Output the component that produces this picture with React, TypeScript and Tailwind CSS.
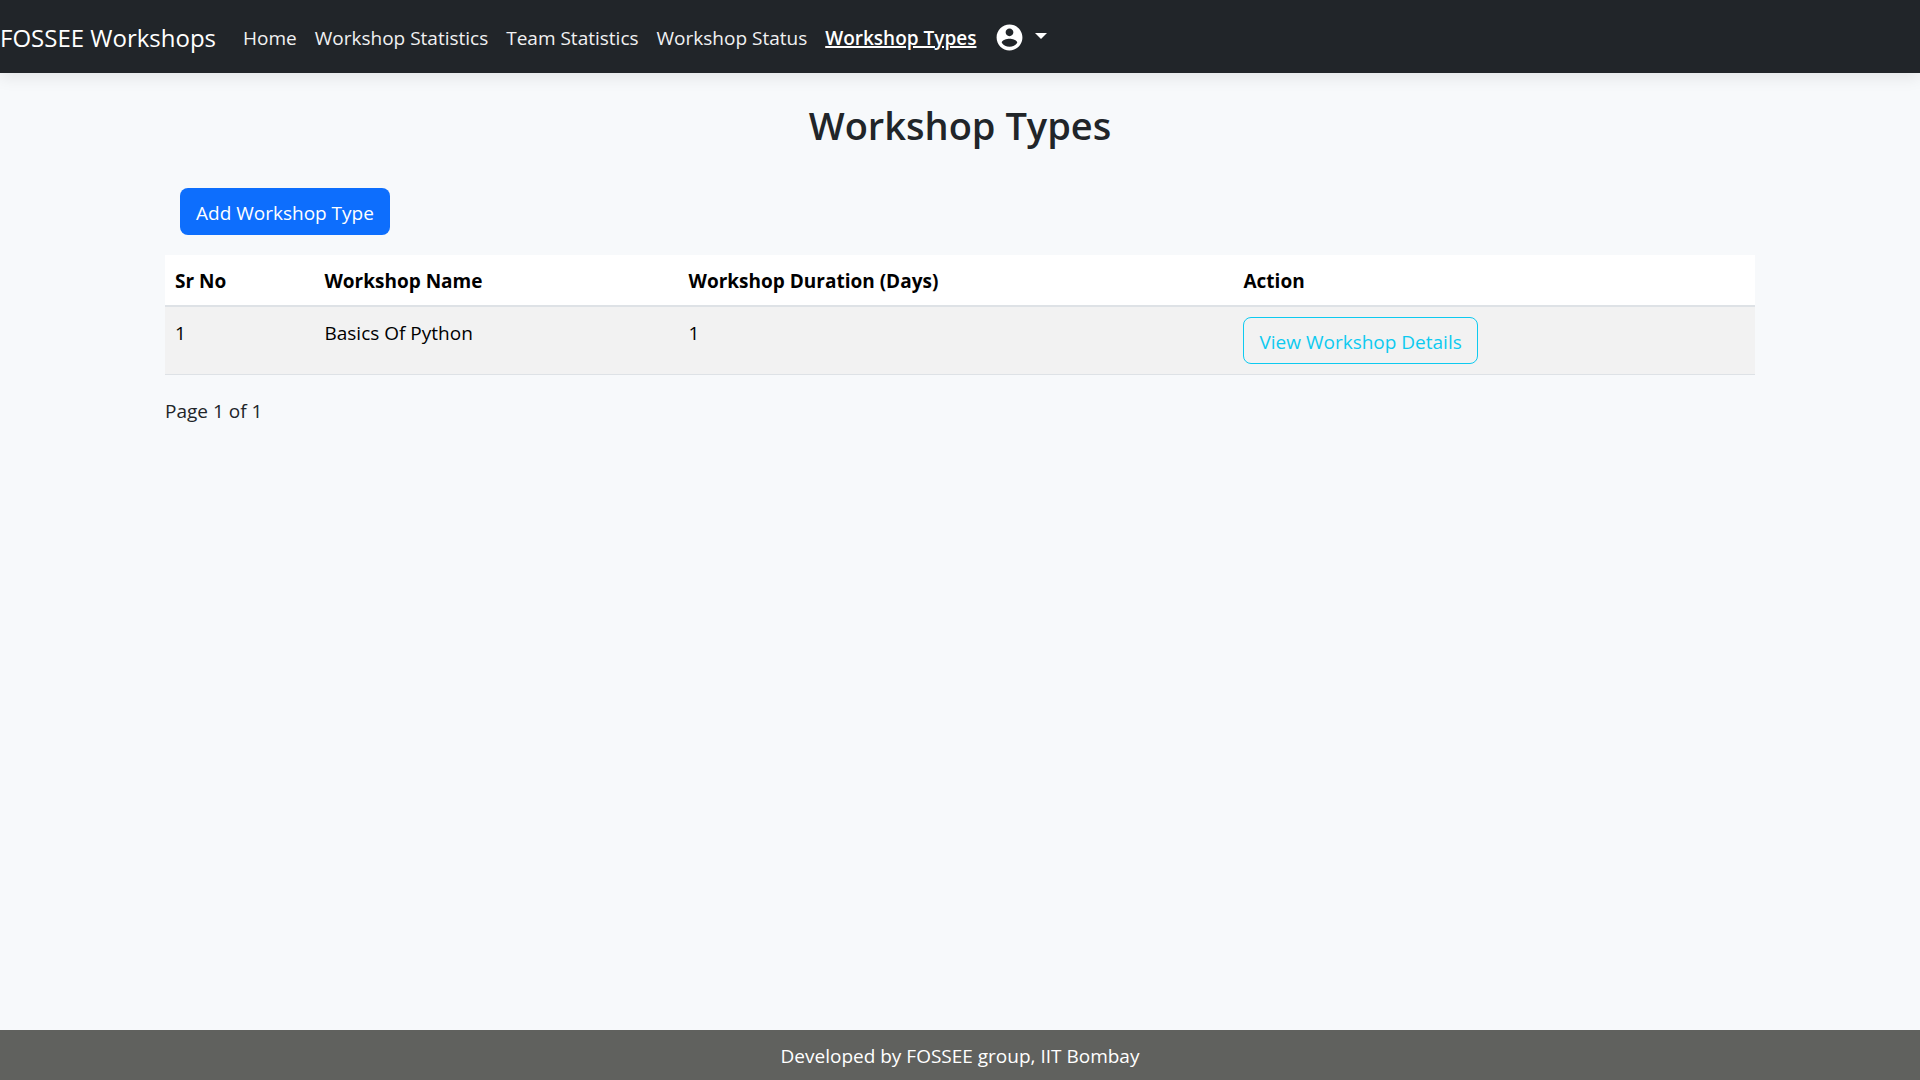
const navLinks = ['Home', 'Workshop Statistics', 'Team Statistics', 'Workshop Status'];

const workshopTypes = [{ id: 1, name: 'Basics Of Python', duration: 1 }];

function Navbar() {
  return (
    <header className="flex h-[73px] items-center bg-[#212529] pt-0.5 text-white shadow-[0_5px_15px_rgba(0,0,0,0.08)]">
      <a href="#" className="mr-[27px] text-2xl">
        FOSSEE Workshops
      </a>
      <nav className="flex items-center gap-[18px] font-medium">
        {navLinks.map((label) => (
          <a key={label} href="#" className="text-[#f1f1f2]">
            {label}
          </a>
        ))}
        <a href="#" aria-current="page" className="font-semibold underline decoration-2">
          Workshop Types
        </a>
        <button type="button" aria-label="Account menu" className="flex items-center gap-2.5">
          <svg viewBox="0 0 24 24" className="size-[31px]" fill="currentColor" aria-hidden="true">
            <path d="M12 2C6.48 2 2 6.48 2 12s4.48 10 10 10 10-4.48 10-10S17.52 2 12 2zm0 3c1.66 0 3 1.34 3 3s-1.34 3-3 3-3-1.34-3-3 1.34-3 3-3zm0 14.2c-2.5 0-4.71-1.28-6-3.22.03-1.99 4-3.08 6-3.08 1.99 0 5.97 1.09 6 3.08-1.29 1.94-3.5 3.22-6 3.22z" />
          </svg>
          <svg viewBox="0 0 12 6" className="mb-1 h-1.5 w-3" fill="currentColor" aria-hidden="true">
            <path d="M0 0h12L6 6z" />
          </svg>
        </button>
      </nav>
    </header>
  );
}

function WorkshopTable() {
  return (
    <table className="w-full table-fixed border-collapse text-left text-black">
      <colgroup>
        <col className="w-[9.4%]" />
        <col className="w-[22.9%]" />
        <col className="w-[34.9%]" />
        <col />
      </colgroup>
      <thead>
        <tr className="border-b-2 border-[#dee2e6] bg-white font-bold">
          <th className="px-2.5 pt-3 pb-2.5">Sr No</th>
          <th className="px-2.5 pt-3 pb-2.5">Workshop Name</th>
          <th className="px-2.5 pt-3 pb-2.5">Workshop Duration (Days)</th>
          <th className="px-2.5 pt-3 pb-2.5">Action</th>
        </tr>
      </thead>
      <tbody>
        {workshopTypes.map((type) => (
          <tr key={type.id} className="border-b border-[#dee2e6] bg-[#f2f2f2] align-top">
            <td className="px-2.5 py-3">{type.id}</td>
            <td className="px-2.5 py-3">{type.name}</td>
            <td className="px-2.5 py-3">{type.duration}</td>
            <td className="p-2.5">
              <a
                href="#"
                className="inline-flex h-[47px] items-center rounded-lg border border-[#0dcaf0] px-[15px] pt-0.5 align-top text-[#0dcaf0]"
              >
                View Workshop Details
              </a>
            </td>
          </tr>
        ))}
      </tbody>
    </table>
  );
}

export default function App() {
  return (
    <div className="flex min-h-screen flex-col bg-[#f7f9fb] font-['Open_Sans',sans-serif] text-[19px] leading-[28px] text-[#212529]">
      <Navbar />
      <main className="mx-auto w-full max-w-[1590px] grow">
        <h1 className="mt-7 text-center text-[38px] leading-[48px] font-semibold">Workshop Types</h1>
        <div className="mt-[39px] ml-[15px]">
          <button type="button" className="h-[47px] rounded-lg bg-[#0d6efd] px-4 pt-0.5 text-white">
            Add Workshop Type
          </button>
        </div>
        <div className="mt-5">
          <WorkshopTable />
        </div>
        <p className="mt-[22px]">Page 1 of 1</p>
      </main>
      <footer className="flex h-[50px] items-center justify-center bg-[#60615e] pt-0.5 text-white">
        Developed by FOSSEE group, IIT Bombay
      </footer>
    </div>
  );
}
